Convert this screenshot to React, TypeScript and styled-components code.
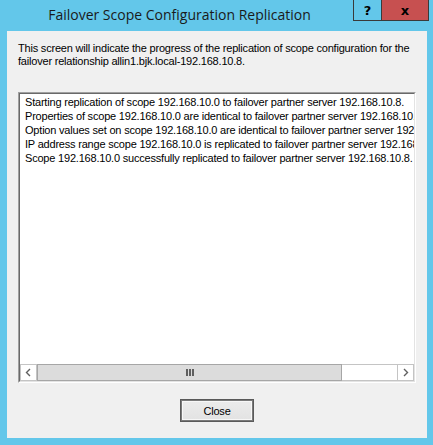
import React from "react";
import styled, { createGlobalStyle } from "styled-components";

const GlobalStyle = createGlobalStyle`
  html, body {
    margin: 0;
    padding: 0;
    background: #63c7ea;
  }
`;

const lines = [
  "Starting replication of scope 192.168.10.0 to failover partner server 192.168.10.8.",
  "Properties of scope 192.168.10.0 are identical to failover partner server 192.168.10.8.",
  "Option values set on scope 192.168.10.0 are identical to failover partner server 192.168.10.8.",
  "IP address range scope 192.168.10.0 is replicated to failover partner server 192.168.10.8.",
  "Scope 192.168.10.0 successfully replicated to failover partner server 192.168.10.8.",
];

const Window = styled.div`
  width: 433px;
  height: 445px;
  background: #63c7ea;
  display: flex;
  flex-direction: column;
  box-sizing: border-box;
`;

const TitleBar = styled.div`
  height: 31px;
  display: flex;
  align-items: flex-start;
  flex-shrink: 0;
`;

const Title = styled.div`
  flex: 1;
  text-align: center;
  font-family: "Open Sans", "Noto Sans", sans-serif;
  font-size: 14px;
  color: #1a1a1a;
  line-height: 30px;
  padding-left: 6px;
`;

const CaptionButtons = styled.div`
  display: flex;
  margin-right: 4px;
`;

const CaptionButton = styled.div<{ $close?: boolean; $width: number }>`
  width: ${(p) => p.$width}px;
  height: 21px;
  box-sizing: border-box;
  border: 1px solid #3a3a3a;
  border-top: none;
  margin-left: ${(p) => (p.$close ? "-1px" : "0")};
  background: ${(p) => (p.$close ? "#c75050" : "transparent")};
  display: flex;
  align-items: center;
  justify-content: center;
  font-family: "DejaVu Sans", sans-serif;
  font-weight: bold;
  font-size: 13px;
  color: #000;
`;

const Client = styled.div`
  flex: 1;
  margin: 0 6px 7px 7px;
  background: #f0f0f0;
  display: flex;
  flex-direction: column;
  padding: 11px 11px 16px 11px;
  box-sizing: border-box;
`;

const Description = styled.p`
  margin: 0;
  font-family: "Liberation Sans", Arial, sans-serif;
  font-size: 11px;
  letter-spacing: -0.2px;
  line-height: 13px;
  color: #000;
`;

const LogBox = styled.div`
  margin-top: 24px;
  height: 291px;
  box-sizing: border-box;
  border-style: solid;
  border-width: 1px;
  border-color: #a0a0a0 #ffffff #ffffff #a0a0a0;
  display: flex;
  flex-direction: column;
`;

const LogInner = styled.div`
  flex: 1;
  border-style: solid;
  border-width: 1px;
  border-color: #696969 #e3e3e3 #e3e3e3 #696969;
  background: #fff;
  display: flex;
  flex-direction: column;
  overflow: hidden;
`;

const LogLines = styled.div`
  flex: 1;
  overflow: hidden;
  padding: 1px 0 0 5px;
`;

const LogLine = styled.div`
  font-family: "Liberation Sans", Arial, sans-serif;
  font-size: 11px;
  letter-spacing: -0.2px;
  line-height: 14px;
  white-space: nowrap;
  color: #000;
`;

const ScrollBar = styled.div`
  height: 17px;
  display: flex;
  flex-shrink: 0;
  background: #fff;
`;

const ArrowButton = styled.div`
  width: 17px;
  height: 17px;
  box-sizing: border-box;
  border: 1px solid #c4c4c4;
  background: #fff;
  display: flex;
  align-items: center;
  justify-content: center;
`;

const Track = styled.div`
  flex: 1;
  display: flex;
  border-top: 1px solid #c4c4c4;
  border-bottom: 1px solid #c4c4c4;
`;

const Thumb = styled.div`
  width: 305px;
  box-sizing: border-box;
  border: 1px solid #a6a6a6;
  margin: -1px 0;
  background: #dcdcdc;
  display: flex;
  align-items: center;
  justify-content: center;
  gap: 1px;
`;

const Grip = styled.span`
  width: 2px;
  height: 7px;
  background: #5f5f5f;
`;

const Footer = styled.div`
  margin-top: 16px;
  display: flex;
  justify-content: center;
`;

const Button = styled.button`
  width: 74px;
  height: 23px;
  box-sizing: border-box;
  border: 1px solid #5a5a5a;
  box-shadow: inset 0 0 0 1px #7a7a7a, inset 0 0 0 2px #f7f7f7;
  background: linear-gradient(#ececec, #e2e2e2);
  font-family: "Liberation Sans", Arial, sans-serif;
  font-size: 11px;
  letter-spacing: -0.2px;
  color: #000;
  padding: 0;
`;

const Chevron = ({ dir }: { dir: "left" | "right" }) => (
  <svg width="7" height="9" viewBox="0 0 7 9">
    <polyline
      points={dir === "left" ? "5,1 1.5,4.5 5,8" : "2,1 5.5,4.5 2,8"}
      fill="none"
      stroke="#606060"
      strokeWidth="1.4"
    />
  </svg>
);

export default function App() {
  return (
    <>
      <GlobalStyle />
      <Window>
        <TitleBar>
          <Title>Failover Scope Configuration Replication</Title>
          <CaptionButtons>
            <CaptionButton $width={29}>?</CaptionButton>
            <CaptionButton $width={48} $close>
              x
            </CaptionButton>
          </CaptionButtons>
        </TitleBar>
        <Client>
          <Description>
            This screen will indicate the progress of the replication of scope
            configuration for the failover relationship
            allin1.bjk.local-192.168.10.8.
          </Description>
          <LogBox>
            <LogInner>
              <LogLines>
                {lines.map((l, i) => (
                  <LogLine key={i}>{l}</LogLine>
                ))}
              </LogLines>
              <ScrollBar>
                <ArrowButton>
                  <Chevron dir="left" />
                </ArrowButton>
                <Track>
                  <Thumb>
                    <Grip />
                    <Grip />
                    <Grip />
                  </Thumb>
                </Track>
                <ArrowButton>
                  <Chevron dir="right" />
                </ArrowButton>
              </ScrollBar>
            </LogInner>
          </LogBox>
          <Footer>
            <Button>Close</Button>
          </Footer>
        </Client>
      </Window>
    </>
  );
}
